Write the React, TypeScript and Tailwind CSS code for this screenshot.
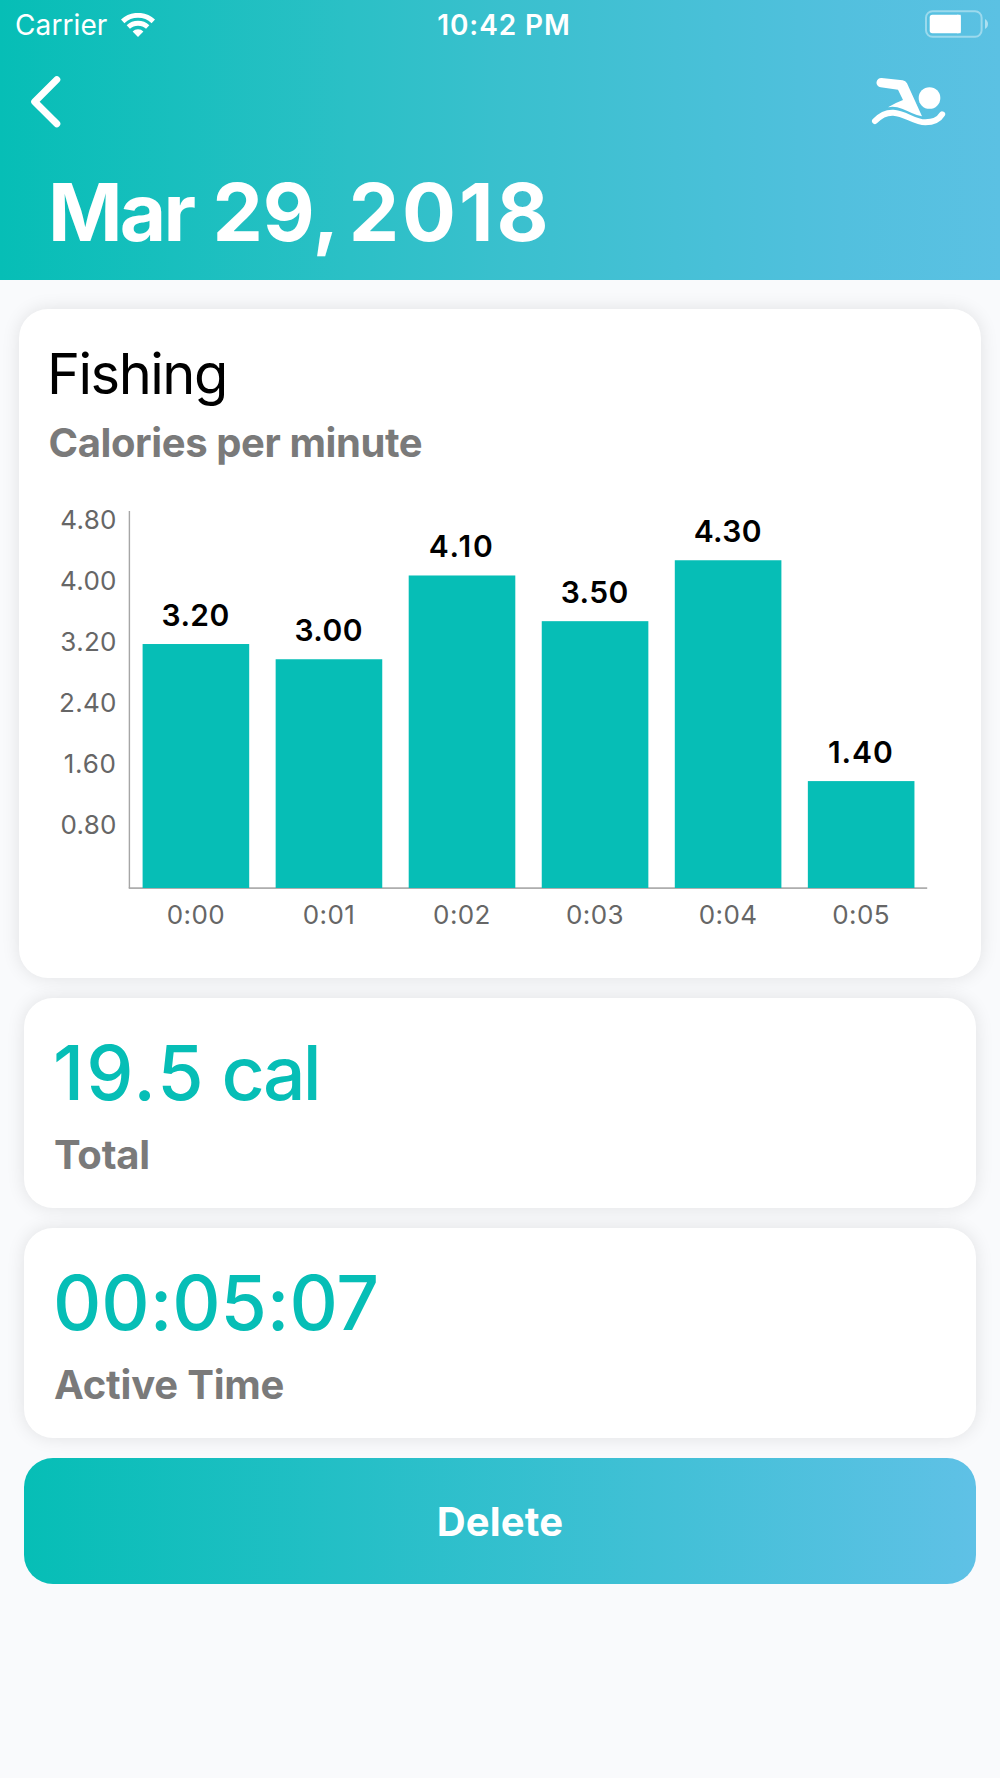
import type { ReactNode } from "react";

const bars = [
  { label: "0:00", value: 3.2 },
  { label: "0:01", value: 3.0 },
  { label: "0:02", value: 4.1 },
  { label: "0:03", value: 3.5 },
  { label: "0:04", value: 4.3 },
  { label: "0:05", value: 1.4 },
];

const ticks = [4.8, 4.0, 3.2, 2.4, 1.6, 0.8];

const AXIS_X = 110.3;
const AXIS_Y = 388;
const UNIT = 76.15;
const STEP = 133.05;

function WifiIcon() {
  return (
    <svg className="-mt-0.5 h-6 w-[34px]" viewBox="0 0 34 24" fill="none" stroke="white">
      <path d="M1.7 8.4 A22.4 22.4 0 0 1 32.3 8.4" strokeWidth="5" />
      <path d="M7.3 14.1 A14.2 14.2 0 0 1 26.7 14.1" strokeWidth="4.8" />
      <path d="M17 24 L11.6 18.6 A7.6 7.6 0 0 1 22.4 18.6 Z" fill="white" stroke="none" />
    </svg>
  );
}

function BatteryIcon() {
  return (
    <svg className="h-7 w-16" viewBox="0 0 64 28">
      <rect x="1" y="1.2" width="55.6" height="25.6" rx="6.5" fill="none" stroke="white" strokeOpacity="0.4" strokeWidth="2" />
      <rect x="4.7" y="4.8" width="31" height="18.4" rx="2.6" fill="white" />
      <rect x="32" y="4.8" width="3.7" height="18.4" fill="white" />
      <path d="M60 9 C64 11 64 17 60 19 Z" fill="white" fillOpacity="0.5" />
    </svg>
  );
}

function SwimmerIcon() {
  return (
    <svg className="h-[54px] w-20" viewBox="90 225 240 162" fill="white">
      <path d="M125 234 L188 240.5 Q197 242 201 250 L246 349 C225 344 205 334 186 326 Q166 318 144 321.5 Q165 309 189 300 L174 269 L122 262 A14 14 0 0 1 125 234 Z" />
      <circle cx="268.5" cy="294" r="32.5" />
      <path
        d="M105 363 C121 346 140 337 160 338 C196 340 222 367 256 367 C280 367 297 359 306.5 343"
        fill="none"
        stroke="white"
        strokeWidth="18"
        strokeLinecap="round"
      />
    </svg>
  );
}

function CaloriesChart() {
  return (
    <svg className="block h-[440px] w-full" viewBox="0 0 962 440">
      {ticks.map((t, i) => (
        <text
          key={t}
          x={97.8}
          y={29 + i * 61}
          textAnchor="end"
          className={`fill-[#666666] text-[26px] ${t === 1.6 ? "tracking-[0.8px]" : "tracking-[0.3px]"}`}
        >
          {t.toFixed(2)}
        </text>
      ))}
      <rect x={AXIS_X - 0.6} y={11} width={1.4} height={AXIS_Y - 11} className="fill-[#a6a6a6]" />
      <rect x={AXIS_X - 0.6} y={AXIS_Y - 0.7} width={798.5} height={1.6} className="fill-[#a6a6a6]" />
      {bars.map((b, i) => {
        const x = AXIS_X + 13.3 + i * STEP;
        const top = AXIS_Y - 0.3 - b.value * UNIT;
        const mid = x + 53.3;
        return (
          <g key={b.label}>
            <rect x={x} y={top} width={106.6} height={b.value * UNIT + 0.3} className="fill-[#06beb6]" />
            <text
              x={mid - 0.3}
              y={top - 18}
              textAnchor="middle"
              className={`fill-black text-[30px] font-semibold ${
                b.value === 4.1 ? "tracking-[1.9px]" : b.value === 1.4 ? "tracking-[0.9px]" : "tracking-[0.4px]"
              }`}
            >
              {b.value.toFixed(2)}
            </text>
            <text x={mid} y={423.6} textAnchor="middle" className="fill-[#666666] text-[26px] tracking-[0.4px]">
              {b.label}
            </text>
          </g>
        );
      })}
    </svg>
  );
}

function StatCard({ value, label }: { value: ReactNode; label: string }) {
  return (
    <section className="mx-6 h-[210px] rounded-[29px] bg-white px-[29px] pt-[35px] shadow-[0_0_18px_rgba(0,0,0,0.1)]">
      <p className="text-[75px] leading-[80px] font-medium text-[#06beb6]">{value}</p>
      <p className="mt-[18px] pl-px text-[40px] leading-[48px] font-[650] tracking-[-0.2px] text-[#7a7a7a]">{label}</p>
    </section>
  );
}

export default function App() {
  return (
    <div className="flex h-[1778px] w-[1000px] flex-col overflow-hidden bg-[#f9fafc] font-['Inter',sans-serif]">
      <header className="flex h-[280px] shrink-0 flex-col bg-[linear-gradient(to_right,#06beb6,#2bc0c6_35%,#3ac0ce_51%,#52c0de_84%,#5bc1e3)] text-white">
        <div className="grid h-[51px] grid-cols-3 items-center text-[28px] leading-[51px]">
          <div className="flex items-center gap-3.5 pl-[15px]">
            <span className="tracking-[0.1px]">Carrier</span>
            <WifiIcon />
          </div>
          <span className="pl-2 text-center font-semibold tracking-[0.9px]">10:42 PM</span>
          <div className="flex justify-end pr-[11px] pb-[3px]">
            <BatteryIcon />
          </div>
        </div>
        <div className="flex h-[121px] items-start justify-between pt-6 pr-[50px] pl-[30px]">
          <svg className="h-[53px] w-8" viewBox="30 75 32 53" fill="none" stroke="white" strokeWidth="7" strokeLinecap="round" strokeLinejoin="round">
            <path d="M56.8 79.6 L34.7 101.7 L56.8 123.8" />
          </svg>
          <SwimmerIcon />
        </div>
        <h1 className="pl-12 text-[80px] leading-[80px] font-bold">
          <span className="tracking-[-2.7px]">Mar</span> <span className="tracking-[0px]">29,</span>{" "}
          <span className="-ml-[7px] tracking-[3px]">2018</span>
        </h1>
      </header>

      <main className="flex flex-col gap-5 pt-[29px]">
        <section className="mx-[19px] h-[669px] rounded-[29px] bg-white pt-[37px] shadow-[0_0_18px_rgba(0,0,0,0.1)]">
          <h2 className="pl-[28px] text-[56px] leading-[56px] font-normal tracking-[-1.5px] text-black">Fishing</h2>
          <p className="mt-[17px] mb-[33px] pl-[29.5px] text-[40px] leading-[48px] font-[650] tracking-[-0.4px] text-[#7a7a7a]">
            Calories per minute
          </p>
          <CaloriesChart />
        </section>
        <StatCard
          value={
            <>
              <span className="tracking-[2px]">19.5</span> <span className="-ml-1 tracking-[-2.7px]">cal</span>
            </>
          }
          label="Total"
        />
        <StatCard value={<span className="tracking-[-0.1px]">00:05:07</span>} label="Active Time" />
        <button className="mx-6 h-[126px] rounded-[29px] bg-[linear-gradient(to_right,#06beb6,#5fc1e6)] pt-[2px] text-[40px] leading-[48px] font-[650] tracking-[0.2px] text-white">
          Delete
        </button>
      </main>
    </div>
  );
}
